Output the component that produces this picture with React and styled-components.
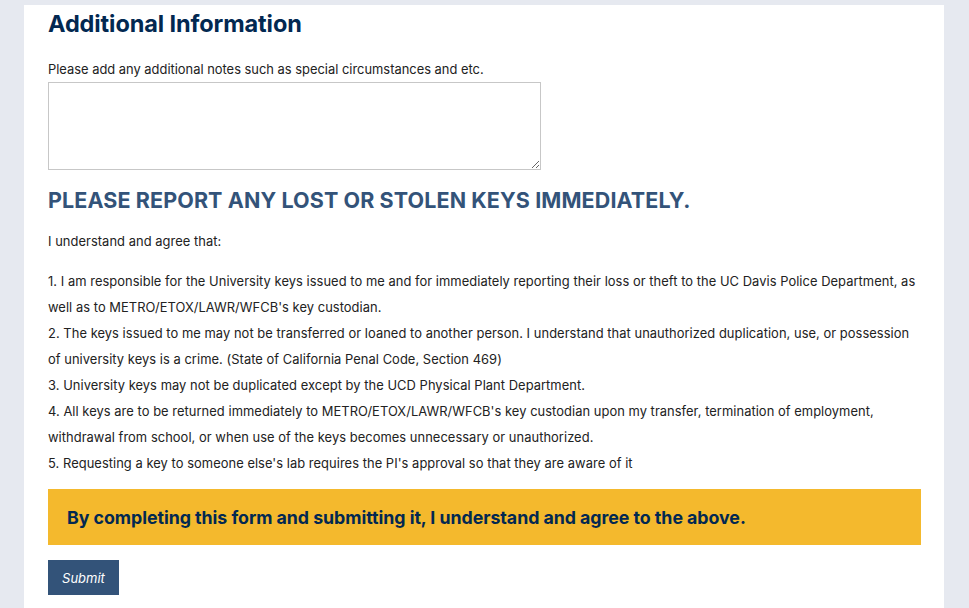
import React from "react";
import styled, { createGlobalStyle } from "styled-components";

const GlobalStyle = createGlobalStyle`
  html, body {
    margin: 0;
    padding: 0;
    background: #e6e9f0;
    font-family: Inter, "Liberation Sans", sans-serif;
  }
`;

const Page = styled.div`
  padding: 5px 25px 0 24px;
  min-height: 608px;
  box-sizing: border-box;
`;

const Card = styled.div`
  background: #fff;
  padding: 8px 23px 20px 24px;
  min-height: 620px;
  box-sizing: border-box;
`;

const Title = styled.h2`
  margin: 0 0 27px;
  font-size: 23.5px;
  line-height: 22px;
  font-weight: 700;
  color: #022851;
  letter-spacing: -0.1px;
`;

const Label = styled.label`
  display: block;
  font-size: 12.9px;
  line-height: 15px;
  color: #222;
  margin-bottom: 5px;
`;

const Notes = styled.textarea`
  display: block;
  width: 493px;
  height: 88px;
  box-sizing: border-box;
  border: 1px solid #c7c7c7;
  margin: 0;
  font: inherit;
`;

const Warning = styled.h3`
  margin: 18px 0 0;
  font-size: 21.5px;
  line-height: 24px;
  font-weight: 700;
  color: #335379;
  letter-spacing: 0.1px;
`;

const Para = styled.p`
  margin: ${(p) => p.$top}px 0 0;
  font-size: 12.9px;
  line-height: 26px;
  color: #222;
  letter-spacing: 0.05px;
`;

const Notice = styled.div`
  margin-top: 12px;
  background: #f4b92d;
  height: 56px;
  display: flex;
  align-items: center;
  padding-left: 19px;
  font-size: 17.8px;
  font-weight: 700;
  color: #022851;
  letter-spacing: -0.05px;
`;

const SubmitButton = styled.button`
  margin-top: 15px;
  width: 71px;
  height: 35px;
  border: none;
  background: #335379;
  color: #fff;
  font-family: inherit;
  font-style: italic;
  font-size: 13px;
  cursor: pointer;
`;

const terms = [
  "1. I am responsible for the University keys issued to me and for immediately reporting their loss or theft to the UC Davis Police Department, as well as to METRO/ETOX/LAWR/WFCB's key custodian.",
  "2. The keys issued to me may not be transferred or loaned to another person. I understand that unauthorized duplication, use, or possession of university keys is a crime. (State of California Penal Code, Section 469)",
  "3. University keys may not be duplicated except by the UCD Physical Plant Department.",
  "4. All keys are to be returned immediately to METRO/ETOX/LAWR/WFCB's key custodian upon my transfer, termination of employment, withdrawal from school, or when use of the keys becomes unnecessary or unauthorized.",
  "5. Requesting a key to someone else's lab requires the PI's approval so that they are aware of it",
];

export default function App() {
  return (
    <Page>
      <GlobalStyle />
      <Card>
        <Title>Additional Information</Title>
        <Label htmlFor="notes">
          Please add any additional notes such as special circumstances and etc.
        </Label>
        <Notes id="notes" />
        <Warning>PLEASE REPORT ANY LOST OR STOLEN KEYS IMMEDIATELY.</Warning>
        <Para $top={17}>I understand and agree that:</Para>
        <Para $top={14}>
          {terms.map((t, i) => (
            <React.Fragment key={i}>
              {t}
              <br />
            </React.Fragment>
          ))}
        </Para>
        <Notice>
          By completing this form and submitting it, I understand and agree to the above.
        </Notice>
        <SubmitButton type="button">Submit</SubmitButton>
      </Card>
    </Page>
  );
}
